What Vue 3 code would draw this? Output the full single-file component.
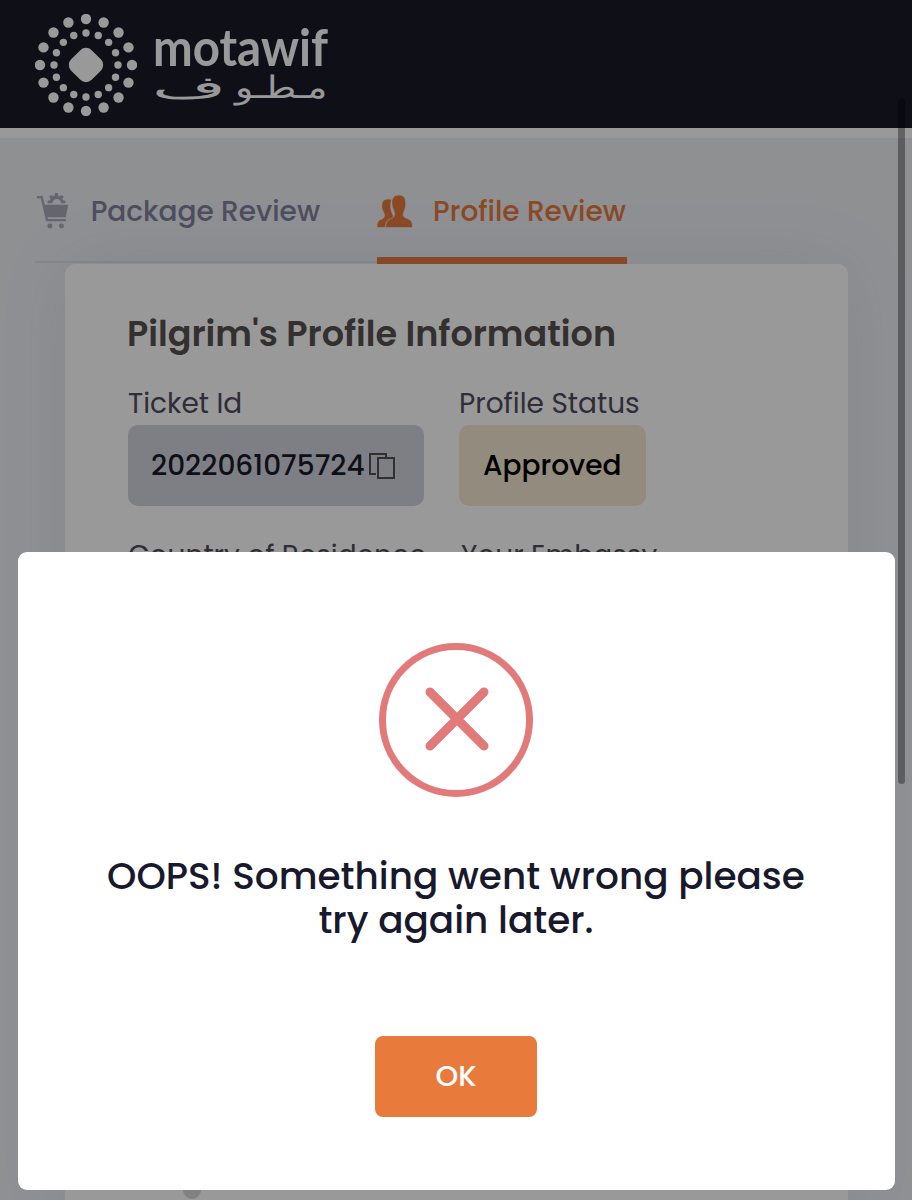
<script setup>
import { ref } from "vue";

const activeTab = ref("profile");
const showAlert = ref(true);

const fields = [
  { label: "Ticket Id", value: "2022061075724", type: "ticket" },
  { label: "Profile Status", value: "Approved", type: "status" },
  { label: "Country of Residence", type: "country" },
  { label: "Your Embassy", type: "embassy" },
];

const makeRing = (radius) =>
  Array.from({ length: 16 }, (_, i) => {
    const angle = (i * Math.PI) / 8;
    return {
      x: 51 + radius * Math.cos(angle),
      y: 51 + radius * Math.sin(angle),
    };
  });

const outerDots = makeRing(46);
const innerDots = makeRing(32);
</script>

<template>
  <div class="page">
    <header class="header">
      <svg class="logo-mark" viewBox="0 0 102 102">
        <circle v-for="dot in outerDots" :cx="dot.x" :cy="dot.y" r="5.2" />
        <circle v-for="dot in innerDots" :cx="dot.x" :cy="dot.y" r="3.7" />
        <rect x="36.500" y="36.500" width="29" height="29" rx="8" transform="rotate(45 51 51)" />
      </svg>
      <svg class="logo-text" viewBox="0 0 180 102">
        <text class="latin" x="-1" y="52" textLength="175" lengthAdjust="spacingAndGlyphs">motawif</text>
        <text class="arabic" x="81" y="84" textLength="93" lengthAdjust="spacingAndGlyphs">مـطـو</text>
        <text class="arabic" x="-2" y="84" textLength="74" lengthAdjust="spacingAndGlyphs">ف</text>
      </svg>
    </header>

    <main class="content">
      <nav class="tabs">
        <button class="tab package" :class="{ active: activeTab === 'package' }" @click="activeTab = 'package'">
          <svg class="cart" viewBox="0 0 34 38">
            <path class="line" d="M1 3.500h5l5.500 24h19.500" />
            <path d="M8 11.500h25.500l-2.500 13h-20z" />
            <path
              d="M12 10v-2.500l2.500-.7.700-1.600-1.500-2 2-2 2 1.400 1.600-.6.700-3h2.600l.7 3 1.600.6 2-1.400 2 2-1.500 2 .7 1.600 2.500.7v2.500h-4.500a4.500 4.500 0 0 0-9 0z"
            />
            <circle cx="14.500" cy="33.500" r="2.600" />
            <circle cx="26.500" cy="33.500" r="2.600" />
          </svg>
          <span>Package Review</span>
        </button>
        <button class="tab profile" :class="{ active: activeTab === 'profile' }" @click="activeTab = 'profile'">
          <svg class="people" viewBox="0 0 36 34">
            <path
              d="M14.500 4.500c-6-1.500-10 1-9.700 6.500 0 4 1.500 5 2.500 8 1 3-.5 4-3.300 5.500-3 1.300-4 3-4 8h8.500c0-5 1.500-7 5-8.500 3-1.300 3.500-2.500 2-5-2-3.500-2.500-9.500-1-14.500z"
            />
            <path
              d="M22 0c-5 0-7.500 3-7 8.500 0 3.500 1 4.500 2 7.500.5 2 1 3 .5 4.500-.5 2-2.500 2.500-4.500 3.500-3 1.500-4.300 3.500-4.300 8.500h26.800c0-5-1-7-4.300-8.500-2.500-1-4.500-2-5-3.500-.5-1.500.5-3 1-4.500 1-3 1.500-4 1.500-7.500 0-5.500-2-8.500-6.700-8.500z"
            />
          </svg>
          <span>Profile Review</span>
        </button>
      </nav>

      <section class="card">
        <h2>Pilgrim's Profile Information</h2>
        <div class="fields">
          <div v-for="field in fields" class="field" :class="field.type">
            <label>{{ field.label }}</label>
            <div v-if="field.value" class="value">
              <span>{{ field.value }}</span>
              <svg v-if="field.type === 'ticket'" class="copy" viewBox="0 0 28 28">
                <path d="M8 22H2V2h16v3" />
                <path d="M10 6h16v20H10z" />
              </svg>
            </div>
          </div>
        </div>
        <span class="step"></span>
      </section>
    </main>

    <div v-if="showAlert" class="overlay">
      <div class="modal">
        <svg class="error-icon" viewBox="0 0 154 154">
          <circle cx="77" cy="77" r="73.500" />
          <path d="M51 49l54 54M105 49l-54 54" />
        </svg>
        <p>
          <span class="line-one">OOPS! Something went wrong please</span>
          <span class="line-two">try again later.</span>
        </p>
        <button class="ok" @click="showAlert = false">OK</button>
      </div>
    </div>
    <div class="scrollbar"></div>
  </div>
</template>

<style>
body {
  margin: 0;
  overflow: hidden;
}
</style>

<style scoped>
.page {
  position: relative;
  height: 1200px;
  display: flex;
  flex-direction: column;
  overflow: hidden;
  background-color: #eef0f4;
  font-family: Poppins, Inter, "Liberation Sans", sans-serif;
}

.page * {
  box-sizing: border-box;
}

button {
  padding: 0;
  border: none;
  background: none;
  font-family: inherit;
  cursor: pointer;
}

.header {
  flex: none;
  height: 138px;
  padding: 14px 35px 0;
  display: flex;
  gap: 17px;
  background-color: #191a29;
  border-bottom: 10px solid white;
}

.logo-mark {
  width: 102px;
  height: 102px;
  fill: white;
}

.logo-text {
  width: 180px;
  height: 102px;
  overflow: visible;
  fill: white;
}

.latin {
  font-family: Lato, sans-serif;
  font-size: 51px;
  font-weight: 700;
}

.arabic {
  font-family: "DejaVu Sans", sans-serif;
  font-size: 31px;
  font-weight: 200;
}

.content {
  flex: 1;
  padding: 0 35px;
  display: flex;
  flex-direction: column;
}

.tabs {
  width: 592px;
  height: 125px;
  display: flex;
  gap: 57px;
  border-bottom: 2px solid #dfe0e7;
}

.tab {
  height: 125px;
  padding-top: 23px;
  display: flex;
  align-items: center;
  font-size: 28px;
  font-weight: 500;
  white-space: nowrap;
  color: #84829e;
}

.tab.package {
  width: 285px;
}

.tab.profile {
  width: 250px;
}

.tab.active {
  height: 126px;
  padding-top: 29px;
  color: #e87a3c;
  border-bottom: 7px solid #e87a3c;
}

.cart {
  width: 34px;
  height: 38px;
  margin: 0 22px 0 1px;
  fill: #a9a9b7;
}

.cart .line {
  fill: none;
  stroke: #a9a9b7;
  stroke-width: 2.5;
}

.people {
  width: 36px;
  height: 34px;
  margin-right: 20px;
  overflow: visible;
  fill: #e87a3c;
  stroke: #eef0f4;
  stroke-width: 0.6;
}

.card {
  flex: 1;
  width: 783px;
  margin: 1px 0 0 30px;
  padding: 49px 62px 0;
  display: flex;
  flex-direction: column;
  align-items: flex-start;
  background-color: white;
  border-radius: 10px 10px 0 0;
  box-shadow: 0 0 70px rgba(110, 110, 180, 0.1);
}

h2 {
  margin: 0;
  font-size: 35px;
  line-height: 42px;
  font-weight: 600;
  white-space: nowrap;
  color: #56504f;
}

.fields {
  margin: 32px 0 0 1px;
  display: grid;
  grid-template-columns: 296px 220px;
  column-gap: 35px;
  row-gap: 33px;
}

.field {
  display: flex;
  flex-direction: column;
  align-items: flex-start;
}

.field.embassy {
  padding-left: 2px;
}

label {
  height: 38px;
  font-size: 28px;
  line-height: 33px;
  white-space: nowrap;
  color: #4d4c5e;
}

.value {
  height: 81px;
  padding: 0 24px;
  display: flex;
  align-items: center;
  gap: 3px;
  border-radius: 10px;
  font-size: 28px;
  font-weight: 500;
}

.ticket .value {
  width: 296px;
  padding-left: 23px;
  background-color: #d3d2de;
  color: #191a29;
}

.status .value {
  width: 187px;
  background-color: #f6e9d3;
}

.copy {
  flex: none;
  width: 28px;
  height: 28px;
  fill: none;
  stroke: #56504f;
  stroke-width: 2;
}

.step {
  width: 18px;
  height: 18px;
  margin: auto 0 1px 56px;
  border-radius: 50%;
  background-color: #d8d8dc;
}

.overlay {
  position: absolute;
  inset: 0;
  padding: 0 17px 10px 18px;
  display: flex;
  flex-direction: column;
  justify-content: flex-end;
  background-color: rgba(0, 0, 0, 0.4);
}

.modal {
  height: 638px;
  padding: 91px 1px 0 0;
  display: flex;
  flex-direction: column;
  align-items: center;
  background-color: white;
  border-radius: 9px;
}

.error-icon {
  width: 154px;
  height: 154px;
  fill: none;
  stroke: #e27a79;
  stroke-width: 7;
}

.error-icon path {
  stroke-width: 9;
  stroke-linecap: round;
}

.modal p {
  margin: 57px 0 0;
  display: flex;
  flex-direction: column;
  align-items: center;
  font-size: 37.4px;
  line-height: 44px;
  font-weight: 500;
  white-space: nowrap;
  color: #18192c;
}

.ok {
  width: 162px;
  height: 81px;
  margin-top: 94px;
  border-radius: 8px;
  background-color: #e87a3c;
  font-size: 29px;
  font-weight: 500;
  color: white;
}

.scrollbar {
  position: absolute;
  top: 98px;
  right: 7px;
  width: 7px;
  height: 686px;
  border-radius: 4px;
  background-color: rgba(0, 0, 0, 0.35);
}
</style>
